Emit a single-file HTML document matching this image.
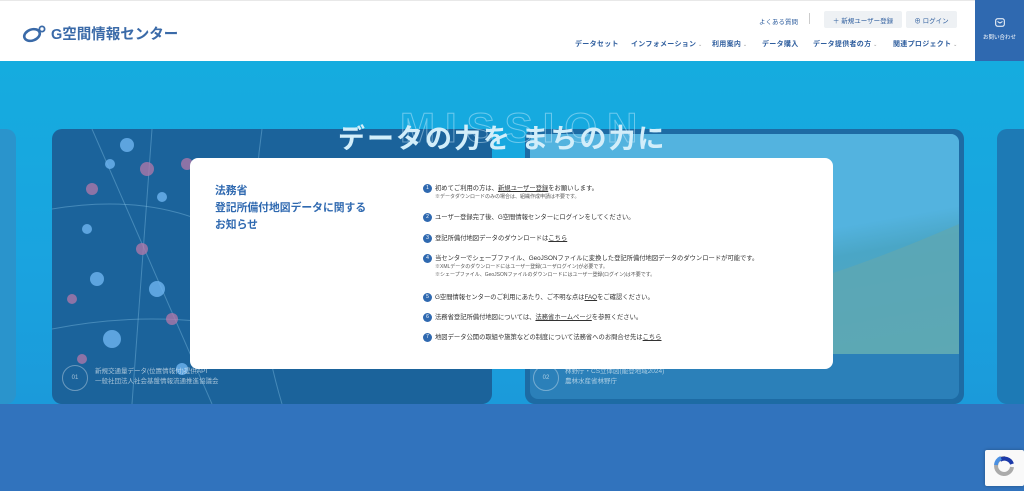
<!DOCTYPE html>
<html><head><meta charset="utf-8">
<style>
*{margin:0;padding:0;box-sizing:border-box}
body{width:1024px;height:491px;overflow:hidden;font-family:"Liberation Sans","Noto Sans CJK JP",sans-serif;background:#3173bd;position:relative}
.hdr{position:absolute;left:0;top:0;width:1024px;height:61px;background:#fff;border-top:1px solid #e8e8e8}
.logo{position:absolute;left:21px;top:22px;display:flex;align-items:center;color:#3a6aa8;font-size:14.5px;font-weight:bold}
.top{position:absolute;top:15px;font-size:6.5px;color:#2f5e9e}
.btn{position:absolute;top:10px;height:17px;background:#eef1f4;border-radius:2px;font-size:6.5px;color:#2f5e9e;display:flex;align-items:center;justify-content:center}
.nav{position:absolute;top:38px;font-size:7px;letter-spacing:.3px;color:#2f5e9e;font-weight:bold;white-space:nowrap}
.nav span{font-size:5px;color:#999;font-weight:normal}
.contact{position:absolute;left:975px;top:0;width:49px;height:61px;background:#2f69b0;color:#fff;font-size:5.5px;text-align:center}
.hero{position:absolute;left:0;top:61px;width:1024px;height:343px;background:linear-gradient(180deg,#15acdf,#1aa3df 60%,#1b9ada)}
.card{position:absolute;border-radius:10px}
.title{position:absolute;left:338px;top:117px;font-size:27px;color:#d2eefa;letter-spacing:2px;font-weight:bold;white-space:nowrap}
.mission{position:absolute;left:400px;top:104px;font-size:42px;color:transparent;-webkit-text-stroke:1px rgba(210,240,255,.45);letter-spacing:10px;font-weight:bold}
.modal{position:absolute;left:190px;top:158px;width:643px;height:211px;background:#fff;border-radius:8px}
.mt{position:absolute;left:25px;top:25px;font-size:10.8px;line-height:17px;color:#2f69b0;font-weight:bold}
.li{position:absolute;left:245px;font-size:6.3px;color:#333;line-height:9px;white-space:nowrap}
.li .n{position:absolute;left:-12px;top:0;width:9px;height:9px;border-radius:50%;background:#2f69b0;color:#fff;font-size:5px;text-align:center;line-height:9px}
.li small{display:block;font-size:5px;color:#555;line-height:8px}
u{color:#333}
.cap{position:absolute;font-size:6.5px;color:rgba(255,255,255,.6);line-height:10px}
.circ{position:absolute;width:26px;height:26px;border:1px solid rgba(255,255,255,.35);border-radius:50%;color:rgba(255,255,255,.6);font-size:6px;text-align:center;line-height:24px}
</style></head><body>
<div class="hdr">
 <div class="logo"><svg width="30" height="20" viewBox="0 0 30 20"><ellipse cx="11" cy="11" rx="8" ry="5.5" fill="none" stroke="#3a6aa8" stroke-width="2.6" transform="rotate(-20 11 11)"/><circle cx="21" cy="5" r="2.6" fill="none" stroke="#3a6aa8" stroke-width="1.8"/></svg><span>G空間情報センター</span></div>
 <div class="top" style="left:759px">よくある質問</div>
 <div style="position:absolute;left:809px;top:12px;width:1px;height:11px;background:#ccc"></div>
 <div class="btn" style="left:824px;width:78px">＋ 新規ユーザー登録</div>
 <div class="btn" style="left:906px;width:51px">⊕ ログイン</div>
 <div class="nav" style="left:575px">データセット</div>
 <div class="nav" style="left:631px">インフォメーション<span> ⌄</span></div>
 <div class="nav" style="left:712px">利用案内<span> ⌄</span></div>
 <div class="nav" style="left:762px">データ購入</div>
 <div class="nav" style="left:813px">データ提供者の方<span> ⌄</span></div>
 <div class="nav" style="left:893px">関連プロジェクト<span> ⌄</span></div>
</div>
<div class="contact"><svg style="margin-top:18px" width="10" height="9" viewBox="0 0 10 9"><rect x="0.7" y="0.7" width="8.6" height="7.6" rx="2" fill="none" stroke="#fff" stroke-width="1"/><path d="M2.5 3.5 L5 5 L7.5 3.5" fill="none" stroke="#fff" stroke-width="1"/></svg><div style="margin-top:4px">お問い合わせ</div></div>
<div class="hero">
 <div class="card" style="left:-20px;top:68px;width:36px;height:275px;background:#2a94cc"></div>
 <div class="card" style="left:52px;top:68px;width:440px;height:275px;background:#1b639b">
  <svg width="440" height="275" style="position:absolute;left:0;top:0">
   <g stroke="rgba(150,210,240,.35)" stroke-width="1" fill="none"><path d="M0 80 Q120 60 200 120 T440 100"/><path d="M100 0 L80 275"/><path d="M210 0 Q190 140 230 275"/><path d="M0 200 Q150 170 300 230"/><path d="M40 0 L160 275"/></g>
   <g fill="rgba(110,180,240,.8)"><circle cx="75" cy="16" r="7"/><circle cx="58" cy="35" r="5"/><circle cx="110" cy="68" r="5"/><circle cx="105" cy="160" r="8"/><circle cx="45" cy="150" r="7"/><circle cx="60" cy="210" r="9"/><circle cx="160" cy="200" r="8"/><circle cx="130" cy="240" r="6"/><circle cx="35" cy="100" r="5"/></g>
   <g fill="rgba(180,120,170,.75)"><circle cx="95" cy="40" r="7"/><circle cx="40" cy="60" r="6"/><circle cx="135" cy="35" r="6"/><circle cx="20" cy="170" r="5"/><circle cx="90" cy="120" r="6"/><circle cx="120" cy="190" r="6"/><circle cx="30" cy="230" r="5"/></g>
  </svg>
  <div class="circ" style="left:10px;top:236px">01</div>
  <div class="cap" style="left:43px;top:238px">新規交通量データ(位置情報付)提供API<br>一般社団法人社会基盤情報流通推進協議会</div>
 </div>
 <div class="card" style="left:525px;top:68px;width:439px;height:275px;background:#1d6ba4">
  <div style="position:absolute;left:5px;top:5px;width:429px;height:265px;border-radius:8px;background:#2b80b9;overflow:hidden">
   <div style="position:absolute;left:0;top:0;width:429px;height:220px;background:linear-gradient(170deg,#53b3df 50%,#4aa6c6 60%,#5aa8b8)"></div>
   <svg width="429" height="220" style="position:absolute;left:0;top:0"><path d="M300 220 L300 140 Q360 120 429 90 L429 220 Z" fill="#5ea7b3" opacity=".8"/></svg>
  </div>
  <div class="circ" style="left:8px;top:236px">02</div>
  <div class="cap" style="left:40px;top:238px">林野庁・CS立体図(能登地域2024)<br>農林水産省林野庁</div>
 </div>
 <div class="card" style="left:997px;top:68px;width:40px;height:275px;background:#1d7ab5"></div>
</div>
<div class="mission">MISSION</div>
<div class="title">データの力を まちの力に</div>
<div class="modal">
 <div class="mt">法務省<br>登記所備付地図データに関する<br>お知らせ</div>
 <div class="li" style="top:26px"><span class="n">1</span>初めてご利用の方は、<u>新規ユーザー登録</u>をお願いします。<small>※データダウンロードのみの場合は、組織作成申請は不要です。</small></div>
 <div class="li" style="top:55px"><span class="n">2</span>ユーザー登録完了後、G空間情報センターにログインをしてください。</div>
 <div class="li" style="top:76px"><span class="n">3</span>登記所備付地図データのダウンロードは<u>こちら</u></div>
 <div class="li" style="top:96px"><span class="n">4</span>当センターでシェープファイル、GeoJSONファイルに変換した登記所備付地図データのダウンロードが可能です。<small>※XMLデータのダウンロードにはユーザー登録(ユーザログイン)が必要です。<br>※シェープファイル、GeoJSONファイルのダウンロードにはユーザー登録(ログイン)は不要です。</small></div>
 <div class="li" style="top:135px"><span class="n">5</span>G空間情報センターのご利用にあたり、ご不明な点は<u>FAQ</u>をご確認ください。</div>
 <div class="li" style="top:155px"><span class="n">6</span>法務省登記所備付地図については、<u>法務省ホームページ</u>を参照ください。</div>
 <div class="li" style="top:175px"><span class="n">7</span>地図データ公開の取組や施策などの制度について法務省へのお問合せ先は<u>こちら</u></div>
</div>
<div style="position:absolute;left:985px;top:450px;width:39px;height:36px;background:#f9f9f9;box-shadow:0 0 3px rgba(0,0,0,.3);border-radius:2px">
 <svg width="39" height="30" viewBox="0 0 39 30"><path d="M20 8 A8 8 0 1 0 27 17" fill="none" stroke="#aaa" stroke-width="4"/><path d="M15 10 A8 8 0 0 1 27 14" fill="none" stroke="#1c3aa9" stroke-width="4"/><path d="M11 15 A8 8 0 0 1 16 8" fill="none" stroke="#4a90e2" stroke-width="4"/></svg>
</div>
</body></html>
